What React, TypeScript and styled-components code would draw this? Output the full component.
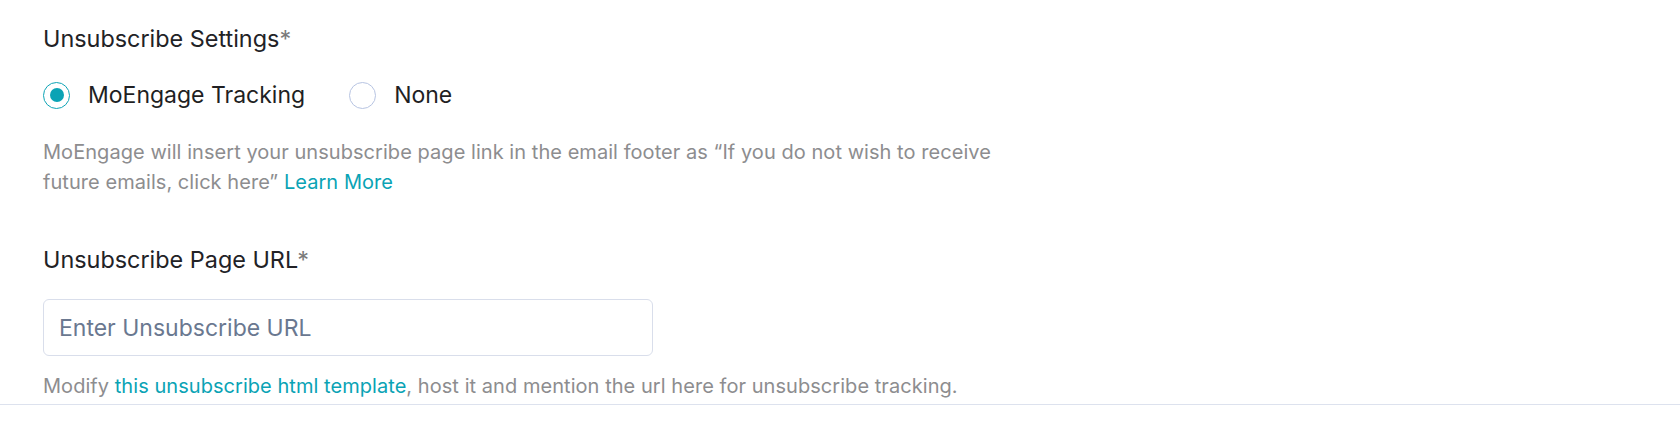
import styled, { createGlobalStyle } from 'styled-components'
import { useState } from 'react'

const GlobalStyle = createGlobalStyle`
  html, body {
    margin: 0;
    padding: 0;
    background: #ffffff;
  }

  body {
    font-family: Inter, 'Noto Sans', sans-serif;
    -webkit-font-smoothing: antialiased;
  }
`

const Page = styled.div`
  width: 100%;
  border-bottom: 1px solid #dde2ee;
`

const Section = styled.div`
  display: flex;
  flex-direction: column;
  padding: 23px 43px 0;
`

const FieldLabel = styled.div<{ $gap?: number }>`
  font-size: 23.4px;
  font-weight: 400;
  line-height: 32px;
  color: #222226;
  margin-top: ${(p) => p.$gap ?? 0}px;
`

const Required = styled.span`
  color: #7a7a7a;
`

const RadioGroup = styled.div`
  display: flex;
  align-items: center;
  gap: 44px;
  margin-top: 25px;
`

const RadioOption = styled.label`
  display: inline-flex;
  align-items: center;
  gap: 18px;
  font-size: 23px;
  line-height: 30px;
  color: #1f1f23;
  cursor: pointer;
`

const RadioCircle = styled.span<{ $checked: boolean }>`
  width: 27px;
  height: 27px;
  box-sizing: border-box;
  border-radius: 50%;
  border: 1.5px solid ${(p) => (p.$checked ? '#0ea4b6' : '#b7c4e2')};
  display: inline-flex;
  align-items: center;
  justify-content: center;
  background: #fff;

  &::after {
    content: '';
    width: 14px;
    height: 14px;
    border-radius: 50%;
    background: #0aa3b5;
    display: ${(p) => (p.$checked ? 'block' : 'none')};
  }
`

const HiddenRadio = styled.input`
  display: none;
`

const Description = styled.p`
  margin: 27px 0 0;
  max-width: 1000px;
  font-size: 20px;
  line-height: 30px;
  letter-spacing: 0.05px;
  color: #8d8d8f;
`

const TextLink = styled.a`
  color: #0aa3b5;
  text-decoration: none;
`

const UrlInput = styled.input`
  margin-top: 23px;
  width: 610px;
  height: 57px;
  box-sizing: border-box;
  padding: 0 15px;
  border: 1px solid #d9deeb;
  border-radius: 6px;
  font-family: inherit;
  font-size: 23px;
  color: #222;
  outline: none;

  &::placeholder {
    color: #6a7890;
  }

  &:focus {
    border-color: #0aa3b5;
  }
`

const Helper = styled.p`
  margin: 18px 0 0;
  padding-bottom: 6px;
  font-size: 20px;
  line-height: 24px;
  letter-spacing: 0.05px;
  color: #8d8d8f;
`

export default function App() {
  const [mode, setMode] = useState<'moengage' | 'none'>('moengage')
  const [url, setUrl] = useState('')

  return (
    <>
      <GlobalStyle />
      <Page>
        <Section>
          <FieldLabel>
            Unsubscribe Settings<Required>*</Required>
          </FieldLabel>

          <RadioGroup>
            <RadioOption>
              <HiddenRadio
                type="radio"
                name="unsub"
                checked={mode === 'moengage'}
                onChange={() => setMode('moengage')}
              />
              <RadioCircle $checked={mode === 'moengage'} />
              MoEngage Tracking
            </RadioOption>
            <RadioOption>
              <HiddenRadio
                type="radio"
                name="unsub"
                checked={mode === 'none'}
                onChange={() => setMode('none')}
              />
              <RadioCircle $checked={mode === 'none'} />
              None
            </RadioOption>
          </RadioGroup>

          <Description>
            MoEngage will insert your unsubscribe page link in the email footer as “If you do
            not wish to receive future emails, click here” <TextLink href="#">Learn More</TextLink>
          </Description>

          <FieldLabel $gap={47}>
            Unsubscribe Page URL<Required>*</Required>
          </FieldLabel>

          <UrlInput
            type="text"
            placeholder="Enter Unsubscribe URL"
            value={url}
            onChange={(e) => setUrl(e.target.value)}
          />

          <Helper>
            Modify <TextLink href="#">this unsubscribe html template</TextLink>, host it and
            mention the url here for unsubscribe tracking.
          </Helper>
        </Section>
      </Page>
    </>
  )
}
